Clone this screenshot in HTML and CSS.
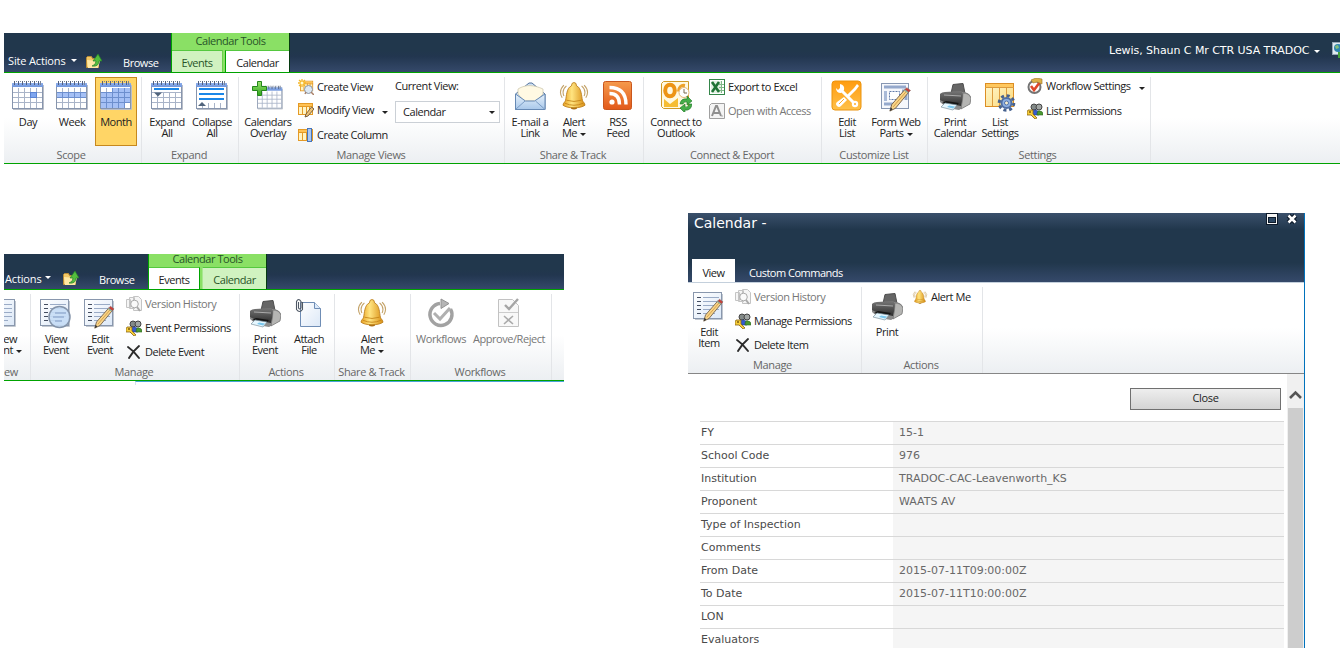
FILE: index.html
```
<!DOCTYPE html>
<html lang="en">
<head>
<meta charset="utf-8">
<title>Calendar</title>
<link rel="stylesheet" href="styles.css">
</head>
<body>
<svg class="sprite" aria-hidden="true">
  <defs>
    <linearGradient id="gCal" x1="0" y1="0" x2="0" y2="1"><stop offset="0" stop-color="#8fb0ec"/><stop offset="1" stop-color="#6f95dc"/></linearGradient>
    <linearGradient id="gBell" x1="0" y1="0" x2="1" y2="0"><stop offset="0" stop-color="#e8a020"/><stop offset=".4" stop-color="#ffe480"/><stop offset="1" stop-color="#d98f14"/></linearGradient>
    <linearGradient id="gOr" x1="0" y1="0" x2="0" y2="1"><stop offset="0" stop-color="#f59a4c"/><stop offset="1" stop-color="#e2591a"/></linearGradient>
    <linearGradient id="gAm" x1="0" y1="0" x2="0" y2="1"><stop offset="0" stop-color="#ff9c10"/><stop offset="1" stop-color="#ffc14a"/></linearGradient>
    <linearGradient id="gMail" x1="0" y1="0" x2="0" y2="1"><stop offset="0" stop-color="#e6f1fb"/><stop offset="1" stop-color="#a9c8ea"/></linearGradient>
    <linearGradient id="gDoc" x1="0" y1="0" x2="1" y2="1"><stop offset="0" stop-color="#fff"/><stop offset="1" stop-color="#dce8f7"/></linearGradient>
    <linearGradient id="gPlus" x1="0" y1="0" x2="0" y2="1"><stop offset="0" stop-color="#9be36e"/><stop offset="1" stop-color="#2fa51c"/></linearGradient>
    <linearGradient id="gPr" x1="0" y1="0" x2="0" y2="1"><stop offset="0" stop-color="#777"/><stop offset="1" stop-color="#2c2c2c"/></linearGradient>
    <linearGradient id="gYel" x1="0" y1="0" x2="1" y2="1"><stop offset="0" stop-color="#fff8cf"/><stop offset="1" stop-color="#fbd97a"/></linearGradient>
  </defs>
  <symbol id="calbase" viewBox="0 0 32 32">
    <path d="M1 29.500h30.500V5" fill="none" stroke="#b9bec8"/>
    <rect x=".5" y="3.500" width="30" height="25" fill="#fff" stroke="#8795ad"/>
    <rect x="0" y="3" width="31" height="4" fill="url(#gCal)"/>
    <path d="M1 12.500h29M1 17.500h29M1 22.500h29M6.500 8v20M12.500 8v20M18.500 8v20M24.500 8v20" stroke="#a9b4c8" fill="none"/>
    <path d="M2.500 1v4M6.500 1v4M10.500 1v4M14.500 1v4M18.500 1v4M22.500 1v4M26.500 1v4" stroke="#53617f" fill="none"/>
    <path d="M4 1.500h1M8 1.500h1M12 1.500h1M16 1.500h1M20 1.500h1M24 1.500h1M28 1.500h1M28.500 1v4" stroke="#7b8598" fill="none"/>
  </symbol>
  <symbol id="day" viewBox="0 0 32 32"><use href="#calbase" width="32" height="32"/><rect x="18.500" y="12.500" width="6" height="5" fill="#7fa6ef" stroke="#5b84d4"/></symbol>
  <symbol id="week" viewBox="0 0 32 32"><use href="#calbase" width="32" height="32"/><rect x="1" y="12" width="29" height="5.500" fill="#a5c0f5"/><path d="M1 12.500h29M1 17.500h29M6.500 13v4M12.500 13v4M18.500 13v4M24.500 13v4" stroke="#6d8fce" fill="none"/></symbol>
  <symbol id="month" viewBox="0 0 32 32"><use href="#calbase" width="32" height="32"/><path d="M12 8h18v15h-6v5H1V12h11z" fill="#a5c0f5"/><path d="M1 12.500h29M1 17.500h29M1 22.500h29M6.500 12v16M12.500 8v20M18.500 8v20M24.500 8v20" stroke="#6d8fce" fill="none"/></symbol>
  <symbol id="expand" viewBox="0 0 32 32"><use href="#calbase" width="32" height="32"/><rect x="1" y="7" width="29" height="5" fill="#fff"/><rect x="3" y="8" width="25" height="2" fill="#1a86e8"/><path d="M3 12.500h8l-4 4z" fill="#51647c"/></symbol>
  <symbol id="collapse" viewBox="0 0 32 32"><use href="#calbase" width="32" height="32"/><rect x="1" y="7" width="29" height="16" fill="#fff"/><path d="M3 9h25M3 14h25M3 19h25" stroke="#1a86e8" stroke-width="2" fill="none"/><path d="M2 26h8l-4-4z" fill="#51647c"/></symbol>
  <symbol id="overlay" viewBox="0 0 32 32"><use href="#calbase" x="5" y="5" width="26" height="26"/><path d="M5.500 1.500h4v5h5v4h-5v5h-4v-5h-5v-4h5z" fill="url(#gPlus)" stroke="#24871a"/></symbol>
  <symbol id="grid16" viewBox="0 0 16 16"><rect x=".5" y="2.500" width="14" height="11" fill="#fff4c4" stroke="#e49a26"/><rect x="1" y="3" width="13" height="2" fill="#ffc254"/><path d="M0 5.500h15M4.500 5v8M8.500 5v8M11.500 5v8" stroke="#e49a26"/></symbol>
  <symbol id="createview" viewBox="0 0 16 16"><use href="#grid16" x="2" width="14" height="14"/><path d="M4 0v8M0 4h8M1 1l6 6M7 1L1 7" stroke="#f5b728" stroke-width="1.300"/><circle cx="4" cy="4" r="1.500" fill="#fffbd0"/><circle cx="10.500" cy="10.500" r="4" fill="#dce8f3" stroke="#8b96a3"/><path d="M13 13l3 3M8 13l-1 2" stroke="#a98068" stroke-width="1.500"/></symbol>
  <symbol id="modifyview" viewBox="0 0 16 16"><use href="#grid16" y="-1" width="16" height="16"/><path d="M13.500 5L16 7l-6 7-3 1 1-3z" fill="#ecc074" stroke="#6b5338" stroke-width=".9"/></symbol>
  <symbol id="createcolumn" viewBox="0 0 16 16"><use href="#grid16" width="16" height="16"/><rect x="9.500" y="1.500" width="4" height="13" fill="#a9c8f5" stroke="#4875b9"/></symbol>
  <symbol id="mail" viewBox="0 0 32 32"><path d="M1.500 14L15 3h3l13 11v15.500H1.500z" fill="#cddff2" stroke="#54759f"/><path d="M4 14V9c8-5 16-4 25 0v5l-7 7H10z" fill="#fff9e3" stroke="#c9c3aa" stroke-width=".7"/><path d="M1.500 14l10 7h9L31 14v15.500H1.500z" fill="url(#gMail)" stroke="#6689b4"/><path d="M2 29l9-8M30.500 29l-9-8" stroke="#7c9dc5"/></symbol>
  <symbol id="bell" viewBox="-3 -4 38 38"><path d="M7 3Q1 8 4 15M4 2q-7 7-2 15M25 3q6 5 3 12M28 2q7 7 2 15" stroke="#c4a369" fill="none" stroke-width="1.300"/><ellipse cx="16" cy="28" rx="4" ry="3" fill="#a96c13"/><path d="M13 3q0-4 3-4t3 4c6 2 6 13 7 17 1 3 3 3 3 6-5 4-21 4-26 0 0-3 2-3 3-6 1-4 1-15 7-17z" fill="url(#gBell)" stroke="#b97915"/><path d="M5 23.500q11 5 22 0M7 20q9 3 18 0" stroke="#c48216" fill="none"/></symbol>
  <symbol id="rss" viewBox="0 0 32 32"><rect x="1.500" y="1.500" width="28" height="28" rx="2" fill="url(#gOr)" stroke="#c9561d"/><circle cx="10" cy="22" r="2.600" fill="#fff"/><path d="M7.500 13.500q10 0 10 11M7.500 7.500q16.500 0 16.500 17" stroke="#fff" stroke-width="3.400" fill="none"/></symbol>
  <symbol id="outlook" viewBox="0 0 32 32"><path d="M1.500 3.500l2-2h25v27h-25l-2-2z" fill="#fff9e0" stroke="#cf9b27"/><path d="M4 19l6 5 8-6v9H4z" fill="#f6bd32"/><ellipse cx="10" cy="10.500" rx="4.800" ry="5.800" fill="#fff9e0" stroke="#ed9414" stroke-width="4"/><path d="M25 5.500q-6-1-6.500 6" stroke="#eda32c" stroke-width="3" fill="none"/><circle cx="24" cy="12.500" r="5" fill="#fff" stroke="#e3b87a"/><path d="M24 9v4h3" stroke="#7b6a50" fill="none"/><path d="M20 24q1-6 7-5V16l5 5-5 4v-3q-3-1-4 2zM32 24q-1 7-7 6v3l-5-5 5-4v3q3 1 4-3z" fill="#45ae48" stroke="#197322" stroke-width=".6"/></symbol>
  <symbol id="excel" viewBox="0 0 16 16"><rect x=".5" y=".5" width="15" height="15" fill="#fff" stroke="#35864a"/><rect x="2" y="2" width="10" height="12" fill="#e4f2e4"/><path d="M12.500 2v12M10 5.500h5M10 8.500h5M10 11.500h5" stroke="#83b88a"/><path d="M3 3l7 10M10 3L3 13" stroke="#207436" stroke-width="2.600"/></symbol>
  <symbol id="access" viewBox="0 0 16 16"><path d="M.5 2.500l2-2h13v15H.500z" fill="#f4f4f4" stroke="#a0a0a0"/><path d="M3 13L7 3h1l4 10M5 10h5" stroke="#8f8f8f" stroke-width="2" fill="none"/><path d="M12 13h2" stroke="#aaa"/></symbol>
  <symbol id="editlist" viewBox="0 0 32 32"><rect x="1" y="1" width="29" height="29" rx="3" fill="url(#gAm)" stroke="#eb940e"/><path d="M10 10l13 13" stroke="#fff" stroke-width="3"/><path d="M5 8q0 5 5 5l3-3q1-5-4-6v4l-2 2z" fill="#fff"/><circle cx="24" cy="24" r="3.200" fill="#fff"/><circle cx="24" cy="24" r="1" fill="#ffae2a"/><path d="M26 4l2 2-3 4-8 8-2-2 8-8z" fill="#fff"/><path d="M13 17l3 3-6 6q-2 2-4 0t0-4z" fill="#fff"/><path d="M8 24l5-5" stroke="#ffac2a"/></symbol>
  <symbol id="pencil" viewBox="0 0 32 32"><path d="M26 8l4 3-14 17-6 3 2-7z" fill="#f7d489" stroke="#66513c" stroke-width=".9"/><path d="M28 9.500L13.500 26.500" stroke="#d69c42"/><path d="M26 8l2-2 4 3-2 2z" fill="#cb3c36" stroke="#82615c" stroke-width=".6"/><path d="M25 9l4 3 1-1-4-3z" fill="#8fae9d"/><path d="M10 31l1-4 2 2z" fill="#333"/></symbol>
  <symbol id="formparts" viewBox="0 0 32 32"><rect x="1.500" y="3.500" width="27" height="25" fill="#f6f8fc" stroke="#8797b2"/><path d="M4 7h22" stroke="#95a9cc" stroke-width="3"/><rect x="4" y="11" width="3" height="10" fill="#a9bad8"/><rect x="9.500" y="11.500" width="10" height="8" fill="#fff" stroke="#607ba8" stroke-dasharray="2 1"/><path d="M22 11h4v9M4 24h9" stroke="#95a9cc" stroke-width="3" fill="none"/><use href="#pencil" y="2" width="31" height="30"/></symbol>
  <symbol id="printer" viewBox="0 -2 32 32"><path d="M14 2.500l10-1 2 10H12z" fill="#666" stroke="#4d4d4d"/><path d="M1 13q0-2 3-2l19-1q7 0 9 5l-1 7-11 6-12-2-7-6z" fill="#8c8c8c"/><path d="M1 12q2-2 5-2l16-1q2 1 2 6l-2 9L7 21 1 18z" fill="url(#gPr)"/><path d="M24 11q6 0 8 5l-1 6-9 5q2-10 2-16z" fill="#b5b5b3" stroke="#686868" stroke-width=".6"/><path d="M7 19l13 2-3 3-14-3z" fill="#151515"/><path d="M6 21l12 2-4 5-12-3z" fill="#e6f7ff" stroke="#7c929e" stroke-width=".7"/><path d="M10 23.500l6 1-2 2-6-1.500z" fill="#7bc8ee"/><path d="M5 13l17 1" stroke="#aaa"/></symbol>
  <symbol id="listset" viewBox="0 0 32 32"><rect x="1.500" y="3.500" width="28" height="23" fill="url(#gYel)" stroke="#dc8e24"/><rect x="2" y="4" width="27" height="3" fill="#ffc85e"/><path d="M1 7.500h29M8.500 8v18M15.500 8v18M22.500 8v18" stroke="#dc9c3e"/><circle cx="22.500" cy="23" r="7.300" fill="none" stroke="#46618e" stroke-width="3" stroke-dasharray="3 2.730"/><circle cx="22.500" cy="23" r="5" fill="#8eb1e4" stroke="#506fa4" stroke-width="2"/><circle cx="22.500" cy="23" r="2" fill="#f8efcf" stroke="#506fa4"/></symbol>
  <symbol id="wfset" viewBox="0 0 16 16"><circle cx="7.500" cy="9" r="6" fill="#fff" stroke="#747474" stroke-width="2"/><path d="M4 8l3 4 6-8" fill="none" stroke="#df4829" stroke-width="2.600"/><path d="M4 2l5-2 6 1v5l-5-2-4 1z" fill="#ddb248" stroke="#937126" stroke-width=".6"/></symbol>
  <symbol id="perms" viewBox="0 0 16 16"><circle cx="7" cy="4" r="3" fill="#838a88" stroke="#444"/><circle cx="12" cy="4" r="3" fill="#a0a5a3" stroke="#444"/><path d="M4 12q0-5 4-5t4 5z" fill="#355bd0" stroke="#27408b" stroke-width=".6"/><path d="M10 12q0-5 3-4 3 0 3 4z" fill="#4b9a32" stroke="#2b661d" stroke-width=".6"/><path d="M1 7h5v4l4 4-2 1-4-4H0V9z" fill="#f8ce38" stroke="#876519" stroke-width=".8"/><circle cx="3" cy="9" r="1" fill="#7a5b10"/></symbol>
  <symbol id="folder" viewBox="0 0 16 16"><path d="M.5 4.500l1-1h4l1 2h6v9H.500z" fill="#f2c766" stroke="#b98c36"/><path d="M1 7l13 1-2 7H2z" fill="#ffe8a4"/><path d="M6 13q4-1 4-5H7l5-7 4 7h-3q0 6-7 5z" fill="#54bd3d" stroke="#23812a" stroke-width=".7"/></symbol>
  <symbol id="doc" viewBox="0 0 32 32"><path d="M2 29.500h27.500V4" stroke="#c2c8d0" fill="none"/><rect x=".5" y="2.500" width="28" height="26" fill="url(#gDoc)" stroke="#8997ad"/><path d="M4 7.500h4M4 11.500h4M4 15.500h4M4 19.500h4M4 23.500h4" stroke="#434d60"/><path d="M10 7.500h16M10 11.500h16M10 15.500h16M10 19.500h16M10 23.500h12" stroke="#9aabc6"/></symbol>
  <symbol id="viewev" viewBox="0 0 32 32"><use href="#doc" width="32" height="32"/><circle cx="19.500" cy="20" r="10.500" fill="#c5dcf5" fill-opacity=".88" stroke="#8393a9" stroke-width="1.500"/><path d="M15 16h11M13 20h11M15 24h7" stroke="#96b0d4" stroke-width="1.500"/></symbol>
  <symbol id="editev" viewBox="0 0 32 32"><use href="#doc" width="32" height="32"/><use href="#pencil" y="4" width="32" height="28"/></symbol>
  <symbol id="history" viewBox="0 0 16 16"><path d="M.5 3.500h4v8h-4zM3.500 1.500h5v11h-5zM7.500.500h5l3 3v11h-8z" fill="#f5f5f5" stroke="#c4c4c4"/><circle cx="8.500" cy="8" r="3.800" fill="#fafafa" stroke="#aaa"/><path d="M11 11l3 4" stroke="#aaa" stroke-width="2"/></symbol>
  <symbol id="delete" viewBox="0 0 16 16"><path d="M2 3q6 4 11 11M13 2Q7 7 3 14" stroke="#2c2c2c" stroke-width="1.900" fill="none" stroke-linecap="round"/></symbol>
  <symbol id="attach" viewBox="0 0 32 32"><path d="M7.500 5.500h14l6 6v18h-20z" fill="url(#gDoc)" stroke="#6f8db5"/><path d="M21.500 5.500v6h6" fill="#dceafa" stroke="#6f8db5"/><path d="M5.500 5v6q1.200 2 2.500 0V4.500q-2.500-4-4.500 0v8q3 4 6 0V5" fill="none" stroke="#4e5865" stroke-width="1.100"/></symbol>
  <symbol id="workflow" viewBox="0 0 32 32"><path d="M25.500 12A11 11 0 1 1 15 6.500" fill="none" stroke="#a2a2a2" stroke-width="3.500"/><path d="M16 2l8 4.500-8 5z" fill="#b5b5b5" stroke="#929292"/><path d="M9 16l6 6 10-11" fill="none" stroke="#b0b0b0" stroke-width="3"/></symbol>
  <symbol id="approve" viewBox="0 0 32 32"><path d="M5.500 2.500h14l6 6v21h-20z" fill="#f8f8f8" stroke="#c2c2c2"/><path d="M12 8l4 4 9-10" stroke="#a5a5a5" stroke-width="2.400" fill="none"/><path d="M11 19l9 8M20 19l-9 8" stroke="#aaa" stroke-width="1.600"/><path d="M6 15.500h19" stroke="#ccc"/></symbol>
  <symbol id="globe" viewBox="0 0 16 16"><rect x=".5" y=".5" width="15" height="12" fill="#dfe9f0" stroke="#94a5b5"/><circle cx="6" cy="6" r="4" fill="#2f84b0"/><path d="M3 4l3-1 1 3-3 1z" fill="#86bf78"/><path d="M6 10h9v6H6z" fill="#43a13a"/></symbol>
</svg>

<header class="ribbon ribbon-top">
  <div class="bar">
    <span class="site">Site Actions</span><i class="caret"></i>
    <svg class="i16 folder"><use href="#folder"/></svg>
    <span class="browse">Browse</span>
    <div class="context">
      <div class="context-title">Calendar Tools</div>
      <div class="tabs"><span class="tab tab-ev">Events</span><span class="tab tab-cal on">Calendar</span></div>
    </div>
    <div class="user"><span class="user-name">Lewis, Shaun C Mr CTR USA TRADOC</span><i class="caret"></i><svg class="i16"><use href="#globe"/></svg></div>
  </div>
  <div class="body">
    <section class="group g-scope">
      <div class="cmds">
        <div class="big"><svg><use href="#day"/></svg><span>Day</span></div>
        <div class="big"><svg><use href="#week"/></svg><span>Week</span></div>
        <div class="big selected"><svg><use href="#month"/></svg><span>Month</span></div>
      </div>
      <div class="label">Scope</div>
    </section>
    <section class="group g-expand">
      <div class="cmds">
        <div class="big"><svg><use href="#expand"/></svg><span>Expand</span><span>All</span></div>
        <div class="big"><svg><use href="#collapse"/></svg><span>Collapse</span><span>All</span></div>
      </div>
      <div class="label">Expand</div>
    </section>
    <section class="group g-views">
      <div class="cmds">
        <div class="big w50"><svg><use href="#overlay"/></svg><span>Calendars</span><span>Overlay</span></div>
        <div class="smalls">
          <div class="small"><svg class="i16"><use href="#createview"/></svg><span>Create View</span></div>
          <div class="small up"><svg class="i16"><use href="#modifyview"/></svg><span>Modify View</span><i class="caret dark low"></i></div>
          <div class="small"><svg class="i16"><use href="#createcolumn"/></svg><span>Create Column</span></div>
        </div>
        <div class="current"><span>Current View:</span><div class="select"><span>Calendar</span><i class="caret dark"></i></div></div>
      </div>
      <div class="label">Manage Views</div>
    </section>
    <section class="group g-share">
      <div class="cmds">
        <div class="big"><svg><use href="#mail"/></svg><span>E-mail a</span><span>Link</span></div>
        <div class="big"><svg><use href="#bell"/></svg><span>Alert</span><span>Me<i class="caret dark in"></i></span></div>
        <div class="big"><svg><use href="#rss"/></svg><span>RSS</span><span>Feed</span></div>
      </div>
      <div class="label">Share &amp; Track</div>
    </section>
    <section class="group g-connect">
      <div class="cmds">
        <div class="big w56"><svg><use href="#outlook"/></svg><span>Connect to</span><span>Outlook</span></div>
        <div class="smalls">
          <div class="small"><svg class="i16"><use href="#excel"/></svg><span>Export to Excel</span></div>
          <div class="small off"><svg class="i16"><use href="#access"/></svg><span>Open with Access</span></div>
        </div>
      </div>
      <div class="label">Connect &amp; Export</div>
    </section>
    <section class="group g-custom">
      <div class="cmds">
        <div class="big w48"><svg><use href="#editlist"/></svg><span>Edit</span><span>List</span></div>
        <div class="big w50"><svg><use href="#formparts"/></svg><span>Form Web</span><span>Parts<i class="caret dark in"></i></span></div>
      </div>
      <div class="label">Customize List</div>
    </section>
    <section class="group g-settings">
      <div class="cmds">
        <div class="big w50"><svg><use href="#printer"/></svg><span>Print</span><span>Calendar</span></div>
        <div class="big w40"><svg><use href="#listset"/></svg><span>List</span><span>Settings</span></div>
        <div class="smalls">
          <div class="small up"><svg class="i16"><use href="#wfset"/></svg><span>Workflow Settings</span><i class="caret dark low"></i></div>
          <div class="small down"><svg class="i16"><use href="#perms"/></svg><span>List Permissions</span></div>
        </div>
      </div>
      <div class="label">Settings</div>
    </section>
  </div>
</header>

<main class="lower">
  <div class="ribbon ribbon-events">
    <div class="bar">
      <span class="site">Actions</span><i class="caret"></i>
      <svg class="i16 folder"><use href="#folder"/></svg>
      <span class="browse">Browse</span>
      <div class="context">
        <div class="context-title">Calendar Tools</div>
        <div class="tabs"><span class="tab tab-ev on">Events</span><span class="tab tab-cal">Calendar</span></div>
      </div>
    </div>
    <div class="body">
      <section class="group g-new">
        <div class="cmds"><div class="big"><svg><use href="#doc"/></svg><span>ew</span><span>nt<i class="caret dark in"></i></span></div></div>
        <div class="label">ew</div>
      </section>
      <section class="group g-manage">
        <div class="cmds">
          <div class="big"><svg><use href="#viewev"/></svg><span>View</span><span>Event</span></div>
          <div class="big"><svg><use href="#editev"/></svg><span>Edit</span><span>Event</span></div>
          <div class="smalls">
            <div class="small off"><svg class="i16"><use href="#history"/></svg><span>Version History</span></div>
            <div class="small"><svg class="i16"><use href="#perms"/></svg><span>Event Permissions</span></div>
            <div class="small"><svg class="i16"><use href="#delete"/></svg><span>Delete Event</span></div>
          </div>
        </div>
        <div class="label">Manage</div>
      </section>
      <section class="group g-actions">
        <div class="cmds">
          <div class="big"><svg><use href="#printer"/></svg><span>Print</span><span>Event</span></div>
          <div class="big"><svg><use href="#attach"/></svg><span>Attach</span><span>File</span></div>
        </div>
        <div class="label">Actions</div>
      </section>
      <section class="group g-share2">
        <div class="cmds"><div class="big w74"><svg><use href="#bell"/></svg><span>Alert</span><span>Me<i class="caret dark in"></i></span></div></div>
        <div class="label">Share &amp; Track</div>
      </section>
      <section class="group g-flow">
        <div class="cmds">
          <div class="big off w60"><svg><use href="#workflow"/></svg><span>Workflows</span></div>
          <div class="big off w76"><svg><use href="#approve"/></svg><span>Approve/Reject</span></div>
        </div>
        <div class="label">Workflows</div>
      </section>
    </div>
    <div class="cell-edge"></div>
  </div>

  <div class="dialog">
    <div class="dialog-head">
      <div class="dialog-title"><span>Calendar -</span>
        <div class="win">
          <svg width="12" height="12" viewBox="0 0 12 12"><rect x=".5" y=".5" width="11" height="11" fill="#f5f5f5" stroke="#0d1a2a"/><rect x="2.500" y="4.500" width="7" height="5" fill="#2c4763" stroke="#0d1a2a"/></svg>
          <svg width="12" height="12" viewBox="0 0 12 12"><path d="M2.500 2.500l7 7M9.500 2.500l-7 7" stroke="#0d1a2a" stroke-width="5"/><path d="M2.500 2.500l7 7M9.500 2.500l-7 7" stroke="#fff" stroke-width="2.500"/></svg>
        </div>
      </div>
      <div class="dialog-tabs"><span class="view-tab">View</span><span class="custom-tab">Custom Commands</span></div>
    </div>
    <div class="body">
      <section class="group g-item">
        <div class="cmds">
          <div class="big w40"><svg><use href="#editev"/></svg><span>Edit</span><span>Item</span></div>
          <div class="smalls">
            <div class="small off"><svg class="i16"><use href="#history"/></svg><span>Version History</span></div>
            <div class="small"><svg class="i16"><use href="#perms"/></svg><span>Manage Permissions</span></div>
            <div class="small"><svg class="i16"><use href="#delete"/></svg><span>Delete Item</span></div>
          </div>
        </div>
        <div class="label">Manage</div>
      </section>
      <section class="group g-act">
        <div class="cmds">
          <div class="big"><svg><use href="#printer"/></svg><span>Print</span></div>
          <div class="smalls"><div class="small"><svg class="i16"><use href="#bell"/></svg><span>Alert Me</span></div></div>
        </div>
        <div class="label">Actions</div>
      </section>
    </div>
    <div class="dialog-main">
      <div class="form">
        <div class="close">Close</div>
        <dl class="fields">
          <dt>FY</dt><dd>15-1</dd>
          <dt>School Code</dt><dd>976</dd>
          <dt>Institution</dt><dd>TRADOC-CAC-Leavenworth_KS</dd>
          <dt>Proponent</dt><dd>WAATS AV</dd>
          <dt>Type of Inspection</dt><dd></dd>
          <dt>Comments</dt><dd></dd>
          <dt>From Date</dt><dd>2015-07-11T09:00:00Z</dd>
          <dt>To Date</dt><dd>2015-07-11T10:00:00Z</dd>
          <dt>LON</dt><dd></dd>
          <dt>Evaluators</dt><dd></dd>
        </dl>
      </div>
      <div class="scroll"><svg width="13" height="10" viewBox="0 0 13 10"><path d="M1 8l5.500-5.500L12 8" fill="none" stroke="#555" stroke-width="2.600"/></svg><div class="thumb"></div></div>
    </div>
  </div>
</main>
</body>
</html>
```
FILE: styles.css
```
* { box-sizing: border-box; }
html, body { margin: 0; }
body {
  width: 1340px; height: 648px; overflow: hidden;
  padding: 33px 0 0 4px; background: #fff; color: #222;
  font: 11px/11px "Open Sans", "Noto Sans", sans-serif;
  letter-spacing: -.45px;
  white-space: nowrap;
}
svg { display: block; flex: none; }
.sprite { position: absolute; width: 0; height: 0; }
.i16 { width: 16px; height: 16px; }

.caret { display: block; flex: none; width: 6px; height: 3px; border: 3px solid transparent; border-top-color: #fff; border-bottom: 0; }
.caret.dark { border-top-color: #222; }
.caret.low { margin: 5px 0 0 5px; }
.caret.in { display: inline-block; margin-left: 3px; vertical-align: 1px; }

/* navigation bar */
.bar { display: flex; height: 39px; overflow: hidden; color: #fff; background: linear-gradient(#21374c 0, #21374c 45%, #22364f 60%, #35496a 100%); }
.site { width: 60px; margin: 22px 0 0 4px; letter-spacing: -.15px; }
.bar > .site + .caret { margin: 26px 0 0 3px; }
.folder { margin: 20px 0 0 9px; }
.browse { width: 34px; margin: 24px 14px 0 21px; }
.context { width: 119px; height: 39px; border: 1px solid #00a300; border-width: 0 1px; border-right-color: #063b10; background: #8ae065; }
.context-title { height: 17px; padding-top: 2px; color: #285428; text-align: center; }
.tabs { display: flex; height: 22px; }
.tab { height: 22px; padding-top: 6px; color: #285428; text-align: center; background: #d0f2c0; border-top: 1px solid #55c83f; }
.tab-ev { width: 51px; margin-right: 2px; border-right: 1px solid #6cd04c; }
.tab-cal { flex: 1; border-left: 1px solid #00a300; }
.tab.on { background: #fff; color: #222; }
.user { display: flex; margin-left: auto; padding-top: 12px; }
.user-name { width: 201px; font-family: "DejaVu Sans", sans-serif; letter-spacing: -.06px; }
.user .caret { margin: 5px 0 0 4px; }
.user .i16 { margin: -3px -8px 0 12px; }

/* command groups */
.body { display: flex; height: 92px; border: 1px solid #00a300; border-width: 1px 0; background: linear-gradient(#fff 0, #fff 50%, #eceff2 100%) padding-box; }
.group { display: flex; flex-direction: column; flex: none; height: 90px; background: linear-gradient(#e3e5e8, #e3e5e8) right 0 top 4px / 1px 100% no-repeat; }
.cmds { display: flex; height: 76px; }
.cmds > * { flex: none; }
.label { padding-right: 6px; text-align: center; color: #666; letter-spacing: -.35px; }
.big { display: flex; flex-direction: column; align-items: center; width: 44px; height: 76px; padding-top: 7px; }
.big svg { width: 32px; height: 32px; margin-bottom: 4px; }
.off { color: #777; }
.big.selected { width: 42px; height: 69px; margin: 4px 0 0 1px; padding-top: 2px; border: 1px solid #c6881e; background: #ffd566; }
.w40 { width: 40px; }
.w48 { width: 48px; }
.w50 { width: 50px; }
.w56 { width: 56px; }
.w60 { width: 60px; }
.w74 { width: 74px; }
.w76 { width: 76px; }
.smalls { padding-top: 2px; }
.small { display: flex; align-items: center; gap: 3px; height: 24px; }
.small span { padding-bottom: 2px; }
.small.up { margin: -1px 0 1px; }
.small.down { margin-top: 1px; }
.g-scope { width: 138px; padding-left: 2px; }
.g-expand { width: 97px; padding-left: 3px; }
.g-expand .big + .big { margin-left: 1px; }
.g-views { width: 266px; padding-left: 4px; }
.g-views .smalls { width: 97px; margin-left: 5px; }
.current { padding-top: 7px; }
.select { display: flex; align-items: center; justify-content: space-between; width: 105px; height: 22px; margin-top: 10px; padding: 0 4px 0 7px; background: #fff; border: 1px solid #cbd0d6; }
.select span { padding-bottom: 2px; }
.g-share { width: 139px; padding-left: 3px; }
.g-connect { width: 178px; padding-left: 4px; }
.g-connect .smalls { margin-left: 5px; }
.g-custom { width: 106px; padding-left: 1px; }
.g-custom .label { padding-right: 3px; }
.g-settings { width: 223px; padding-left: 2px; }
.g-settings .smalls { margin-left: 7px; }

.lower { display: flex; align-items: flex-start; padding-top: 49px; }

/* events ribbon */
.ribbon-events { width: 560px; margin-top: 41px; }
.ribbon-events .bar { height: 35px; }
.ribbon-events .site { width: 37px; margin: 19px 0 0 1px; }
.ribbon-events .bar > .site + .caret { margin-top: 22px; }
.ribbon-events .folder { margin: 16px 0 0 12px; }
.ribbon-events .browse { margin-top: 20px; margin-right: 15px; }
.ribbon-events .browse { margin-left: 20px; }
.ribbon-events .context-title { height: 13px; padding-top: 0; line-height: 9px; }
.ribbon-events .tab-ev { border-right-color: #00a300; }
.ribbon-events .tab-cal { border-left-color: #a8e890; }
.g-new { width: 27px; overflow: hidden; }
.g-new .big { width: 20px; align-items: flex-end; }
.g-new .big svg { margin-right: 6px; }
.g-new .big span:nth-of-type(1) { margin-right: 7px; }
.g-new .big span:nth-of-type(2) { margin-right: 2px; }
.g-new .label { text-align: left; }
.g-manage { width: 209px; padding-left: 3px; }
.g-manage .smalls { margin-left: 4px; }
.g-actions { width: 95px; padding-left: 3px; }
.g-share2 { width: 76px; }
.g-flow { width: 141px; }
.g-share2 .label, .g-flow .label { padding-right: 3px; }
.cell-edge { height: 4px; margin-left: 131px; border-top: 1px solid #4ba3d8; border-left: 1px solid #d5e3ef; }

/* item dialog */
.dialog { width: 617px; height: 435px; margin-left: 124px; border-right: 1px solid #0072bc; }
.dialog-head { height: 69px; color: #fff; background: linear-gradient(#3a506b 0, #21374c 24%, #21374c 72%, #35496a 100%); }
.dialog-title { display: flex; justify-content: space-between; height: 46px; padding: 3px 6px 0; font: 14px/14px "DejaVu Sans", sans-serif; letter-spacing: 0; }
.win { display: flex; gap: 8px; margin-top: -3px; }
.dialog-tabs { display: flex; height: 23px; letter-spacing: -.5px; }
.view-tab { width: 43px; margin-left: 4px; padding-top: 8px; color: #222; background: #fff; text-align: center; }
.custom-tab { margin-left: 14px; padding-top: 8px; }
.dialog .body { border-color: #c4d0dc transparent #868686; }
.g-item { width: 174px; padding-left: 1px; }
.g-item .smalls { margin-left: 6px; }
.g-act { width: 121px; padding-left: 3px; }
.g-act .smalls { margin-left: 3px; }
.dialog-main { display: flex; height: 274px; }
.form { width: 599px; padding: 14px 3px 0 12px; }
.close { width: 151px; height: 22px; margin: 0 3px 11px auto; border: 1px solid #707070; background: linear-gradient(#eee, #d4d4d4); line-height: 18px; text-align: center; letter-spacing: -.3px; }
.fields { display: grid; grid-template-columns: 193px 1fr; margin: 0; font: 11px/21px "DejaVu Sans", sans-serif; letter-spacing: 0; color: #4a4a4a; }
.fields dt, .fields dd { height: 23px; margin: 0; border-top: 1px solid #d8d8d8; }
.fields dt { padding-left: 1px; }
.fields dd { padding-left: 6px; color: #686868; background: #f5f5f5; }
.scroll { width: 17px; padding: 16px 1px 0; background: #f0f0f0; }
.scroll svg { margin: 0 1px; }
.thumb { height: 240px; margin-top: 8px; background: #cdcdcd; }
```
